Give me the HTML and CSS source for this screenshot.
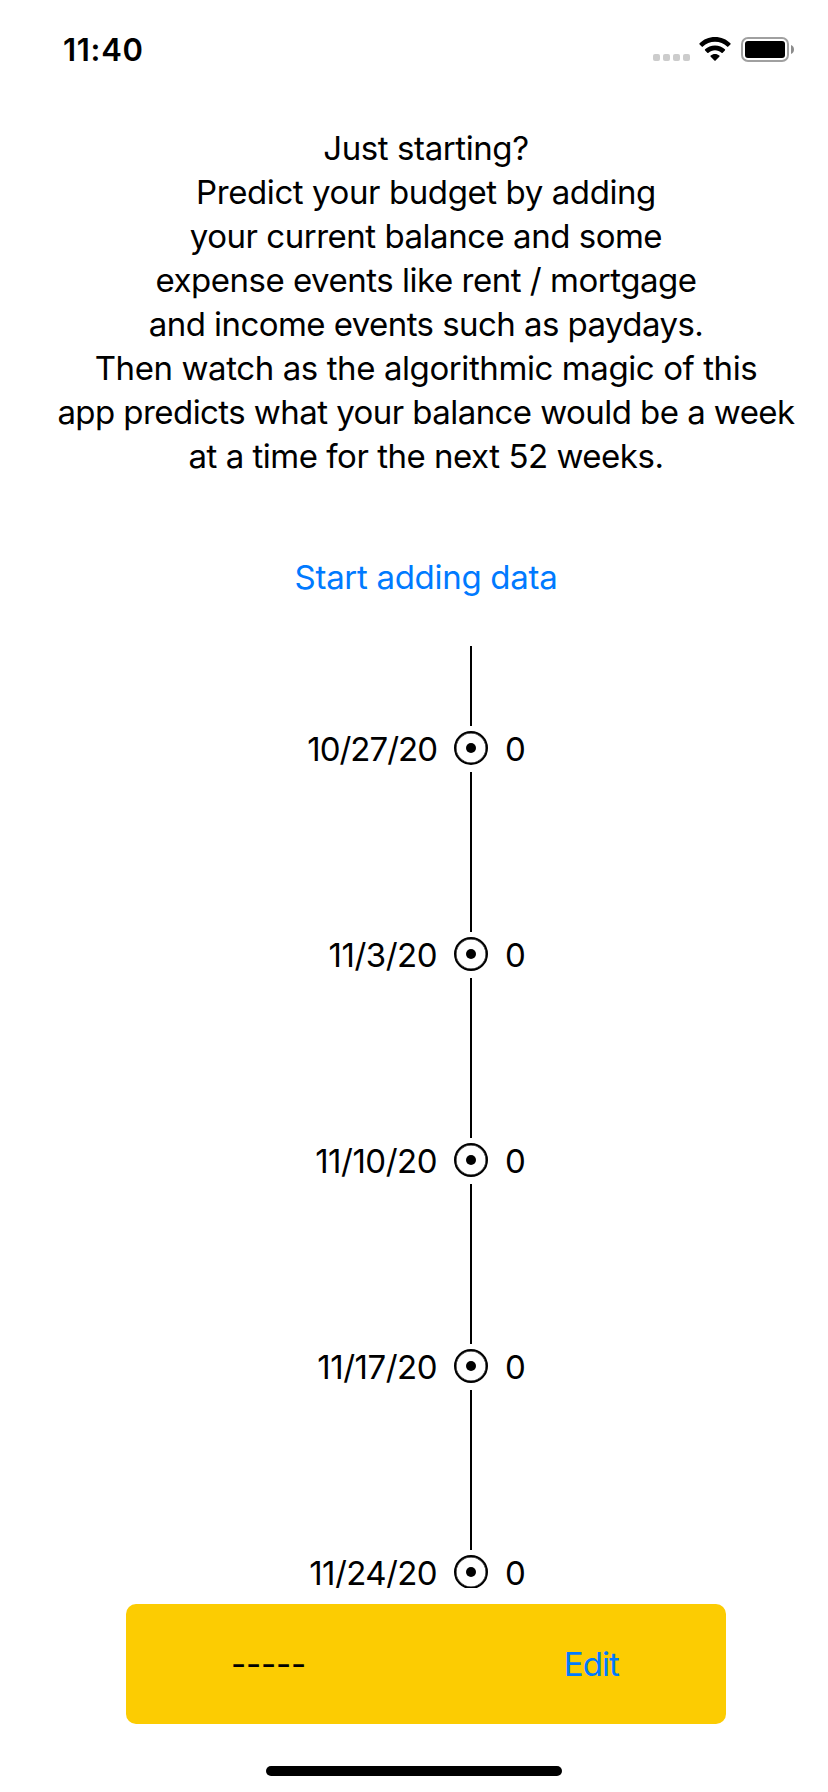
FILE: index.html
```html
<!DOCTYPE html>
<html lang="en">
<head>
<meta charset="utf-8">
<title>Budget</title>
<link rel="stylesheet" href="styles.css">
</head>
<body>
<div class="screen">
  <header class="status">
    <span class="clock">11:40</span>
    <span class="signal"><i></i><i></i><i></i><i></i></span>
    <svg class="wifi" width="32" height="25" viewBox="0 0 32 25">
      <path d="M16 0C22.200 0 27.600 2.400 31.400 6.300C31.800 6.700 31.800 7.100 31.400 7.500L29.300 9.600C28.900 10 28.500 10 28.100 9.600C24.900 6.500 20.700 4.800 16 4.800S7.100 6.500 3.900 9.600C3.500 10 3.100 10 2.700 9.600L.6 7.500C.2 7.100 .2 6.700 .6 6.300C4.400 2.400 9.800 0 16 0Z"/>
      <path d="M16 8.600C20 8.600 23.300 10 25.900 12.300C26.300 12.700 26.300 13.100 25.900 13.500L23.700 15.700C23.300 16.100 22.900 16 22.500 15.700C20.700 14.200 18.500 13.300 16 13.300S11.300 14.200 9.500 15.700C9.100 16 8.700 16.100 8.300 15.700L6.100 13.500C5.700 13.100 5.700 12.700 6.100 12.300C8.700 10 12 8.600 16 8.600Z"/>
      <path d="M16 17C17.700 17 19.200 17.600 20.300 18.500C20.700 18.900 20.700 19.300 20.300 19.700L16.600 23.400C16.200 23.800 15.800 23.800 15.400 23.400L11.700 19.700C11.300 19.300 11.300 18.900 11.700 18.500C12.800 17.600 14.300 17 16 17Z"/>
    </svg>
    <svg class="battery" width="53" height="25" viewBox="0 0 53 25">
      <rect x="1" y="1" width="46" height="23" rx="6" fill="none" stroke="#a0a0a0" stroke-width="2"/>
      <rect x="4" y="4" width="40" height="17" rx="3"/>
      <path d="M50 8C52 8.800 53 10.500 53 12.500S52 16.200 50 17Z" fill="#8c8c8c"/>
    </svg>
  </header>
  <main class="content">
    <p class="intro"><span class="loose">Just starting?</span><br><span class="loose">Predict your budget by adding</span><br>your current balance and some<br>expense events like rent / mortgage<br><span class="tight">and income events such as paydays.</span><br><span class="loose">Then watch as the algorithmic magic of this</span><br><span class="tight">app predicts what your balance would be a week</span><br>at a time for the next 52 weeks.</p>
    <a class="start">Start adding data</a>
    <ol class="timeline">
      <li class="stem first"></li>
      <li class="event"><span class="date wide">10/27/20</span><span class="dot"></span><span class="amount">0</span></li>
      <li class="stem"></li>
      <li class="event"><span class="date">11/3/20</span><span class="dot"></span><span class="amount">0</span></li>
      <li class="stem"></li>
      <li class="event"><span class="date">11/10/20</span><span class="dot"></span><span class="amount">0</span></li>
      <li class="stem"></li>
      <li class="event"><span class="date">11/17/20</span><span class="dot"></span><span class="amount">0</span></li>
      <li class="stem"></li>
      <li class="event last"><span class="date">11/24/20</span><span class="dot"></span><span class="amount">0</span></li>
    </ol>
    <div class="card"><span class="value">-----</span><a class="edit">Edit</a></div>
  </main>
  <div class="home"></div>
</div>
</body>
</html>
```
FILE: styles.css
```css
* { box-sizing: border-box; }
body { margin: 0; background: #fff; color: #000; font-family: Inter, sans-serif; font-size: 33px; line-height: 44px; }
.screen { width: 828px; height: 1792px; display: flex; flex-direction: column; overflow: hidden; }
.status { height: 126px; padding: 0 34px 0 63px; display: flex; align-items: flex-start; }
.clock { margin-top: 28px; margin-right: auto; font-size: 31px; font-weight: 600; letter-spacing: 0.7px; }
.signal { display: flex; gap: 3px; margin: 54px 9px 0 0; }
.signal i { width: 7px; height: 7px; border-radius: 2px; background: #ccc; }
.wifi { margin: 37px 10px 0 0; }
.battery { margin-top: 37px; }
.content { padding-left: 24px; display: flex; flex-direction: column; align-items: center; }
.intro { margin: 0; text-align: center; white-space: nowrap; letter-spacing: -0.48px; }
.loose { letter-spacing: -0.41px; }
.tight { letter-spacing: -0.56px; }
.start { margin-top: 77px; color: #007aff; letter-spacing: -0.3px; }
.timeline { list-style: none; margin: 47px 0 0; padding: 0; height: 942px; width: 804px; overflow: hidden; }
.stem { width: 2px; height: 160px; margin-left: 446px; background: #000; }
.stem.first { height: 80px; }
.event { height: 46px; display: grid; grid-template-columns: 413px 34px 1fr; column-gap: 17px; align-items: center; }
.date { text-align: right; letter-spacing: -0.5px; }
.date.wide { letter-spacing: -1px; }
.last .date { letter-spacing: -0.6px; }
.dot { width: 34px; height: 34px; margin-top: -2px; border: 2px solid #000; border-radius: 50%; display: grid; place-items: center; box-shadow: inset 0 0 0 0.5px #000; }
.dot::after { content: ""; width: 10px; height: 10px; border-radius: 50%; background: #000; }
.card { width: 600px; height: 120px; margin-top: 16px; border-radius: 10px; background: #fccc02; display: flex; align-items: center; justify-content: space-between; padding: 0 107px 0 105px; }
.value { letter-spacing: -0.2px; }
.edit { color: #007aff; letter-spacing: -0.9px; }
.home { width: 296px; height: 10px; margin: 42px auto 0; border-radius: 5px; background: #000; }
```
